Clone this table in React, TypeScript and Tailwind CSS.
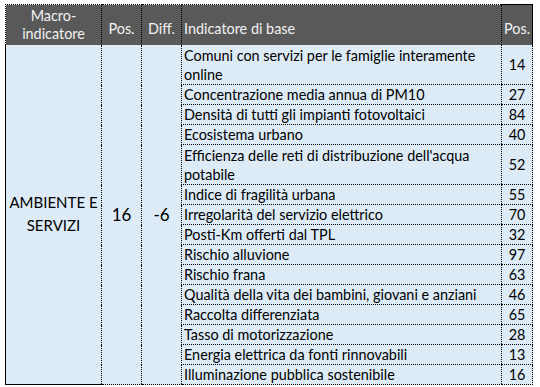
import React from 'react';

const rows: { name: string; pos: number; wrap?: boolean }[] = [
  { name: 'Comuni con servizi per le famiglie interamente online', pos: 14, wrap: true },
  { name: 'Concentrazione media annua di PM10', pos: 27 },
  { name: 'Densità di tutti gli impianti fotovoltaici', pos: 84 },
  { name: 'Ecosistema urbano', pos: 40 },
  { name: "Efficienza delle reti di distribuzione dell'acqua potabile", pos: 52, wrap: true },
  { name: 'Indice di fragilità urbana', pos: 55 },
  { name: 'Irregolarità del servizio elettrico', pos: 70 },
  { name: 'Posti-Km offerti dal TPL', pos: 32 },
  { name: 'Rischio alluvione', pos: 97 },
  { name: 'Rischio frana', pos: 63 },
  { name: 'Qualità della vita dei bambini, giovani e anziani', pos: 46 },
  { name: 'Raccolta differenziata', pos: 65 },
  { name: 'Tasso di motorizzazione', pos: 28 },
  { name: 'Energia elettrica da fonti rinnovabili', pos: 13 },
  { name: 'Illuminazione pubblica sostenibile', pos: 16 },
];

function App() {
  return (
    <div
      className="w-[540px] h-[387px] bg-white pl-[5px] pt-[4px] overflow-hidden"
      style={{ fontFamily: 'Lato, "Liberation Sans", sans-serif' }}
    >
      <table className="border-collapse table-fixed w-[527px] text-[14.4px] text-black">
        <colgroup>
          <col className="w-[96px]" />
          <col className="w-[40px]" />
          <col className="w-[40px]" />
          <col className="w-[320px]" />
          <col className="w-[31px]" />
        </colgroup>
        <thead>
          <tr className="bg-[#595959] text-[#f2f2f2] h-[40px] leading-[18px]">
            <th className="p-0 font-normal text-center border-t border-t-black border-l border-l-black border-dotted border-r border-r-black">
              Macro-
              <br />
              indicatore
            </th>
            <th className="p-0 font-normal text-center align-middle border-t border-t-black border-r border-dotted border-r-black pt-[8px]">Pos.</th>
            <th className="p-0 font-normal text-center align-middle border-t border-t-black border-r border-dotted border-r-black pt-[8px]">Diff.</th>
            <th className="p-0 font-normal text-left align-middle border-t border-t-black border-r border-dotted border-r-black pl-[2px] pt-[8px]">Indicatore di base</th>
            <th className="p-0 font-normal text-left align-middle border-t border-t-black border-r border-r-black border-solid pl-[2px] pt-[8px]">Pos.</th>
          </tr>
        </thead>
        <tbody className="bg-[#ddebf7]">
          {rows.map((r, i) => (
            <tr key={i} className={r.wrap ? 'h-[40px]' : 'h-[20px]'}>
              {i === 0 && (
                <>
                  <td rowSpan={rows.length} className="p-0 border-l border-solid border-black border-b text-center align-middle text-[15px] leading-[23px]">
                    AMBIENTE E
                    <br />
                    SERVIZI
                  </td>
                  <td rowSpan={rows.length} className="p-0 border-l border-dotted border-black border-b text-center align-middle text-[17px]">
                    16
                  </td>
                  <td rowSpan={rows.length} className="p-0 border-l border-dotted border-black border-b text-center align-middle text-[17px]">
                    -6
                  </td>
                </>
              )}
              <td className="p-0 border-l border-dotted border-black border-b pl-[2px] pr-1 leading-[19px] align-bottom">
                {r.name}
              </td>
              <td className="p-0 border-l border-dotted border-black border-r border-r-black text-center align-middle leading-[19px] border-b">
                {r.pos}
              </td>
            </tr>
          ))}
        </tbody>
      </table>
    </div>
  );
}

export default App;
